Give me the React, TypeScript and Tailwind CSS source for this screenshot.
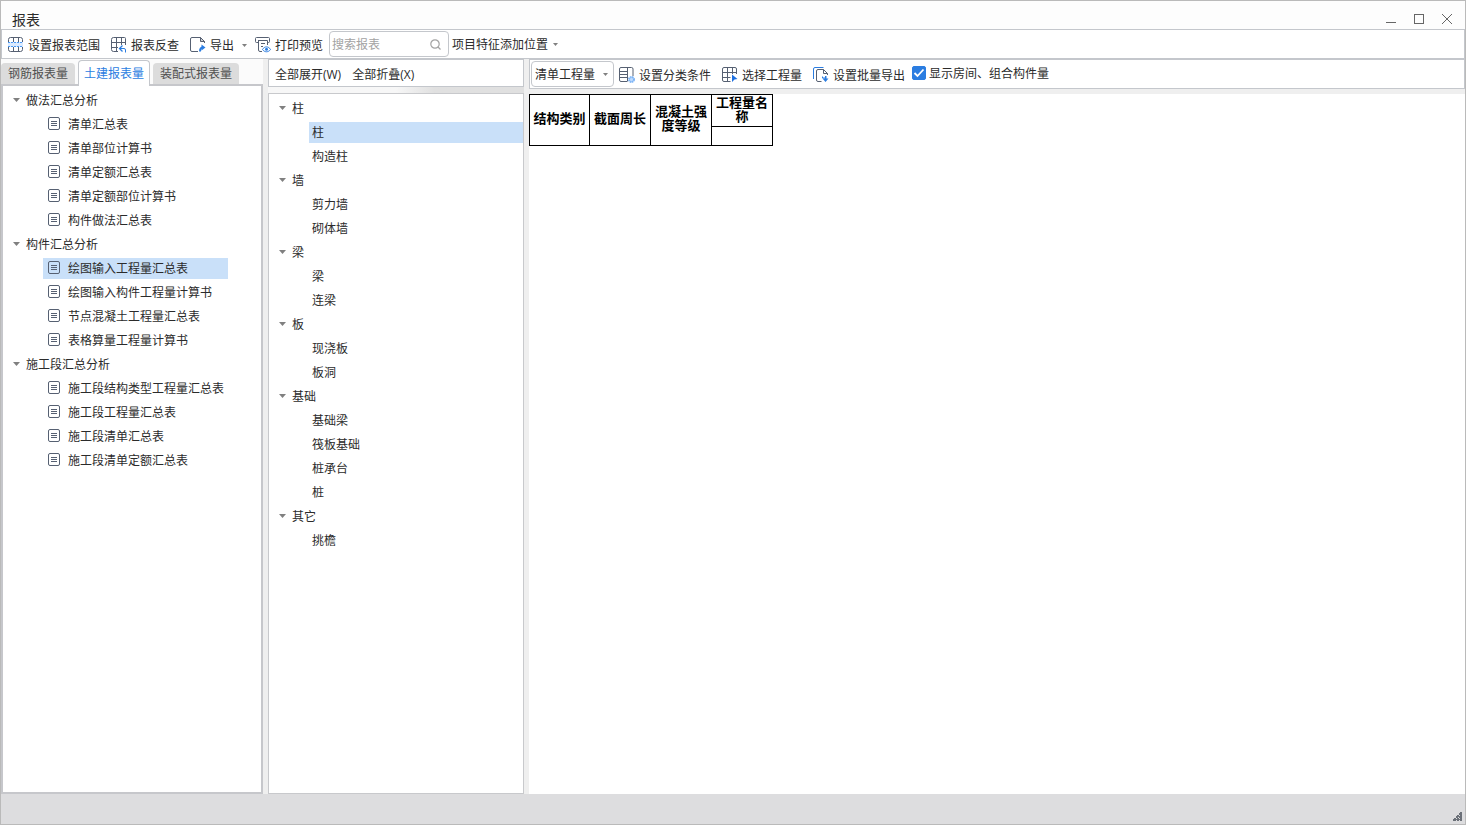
import { useState } from "react";
import type { ReactNode } from "react";

type TreeGroup = { name: string; items: string[] };

const reportTree: TreeGroup[] = [
  {
    name: "做法汇总分析",
    items: ["清单汇总表", "清单部位计算书", "清单定额汇总表", "清单定额部位计算书", "构件做法汇总表"],
  },
  {
    name: "构件汇总分析",
    items: ["绘图输入工程量汇总表", "绘图输入构件工程量计算书", "节点混凝土工程量汇总表", "表格算量工程量计算书"],
  },
  {
    name: "施工段汇总分析",
    items: ["施工段结构类型工程量汇总表", "施工段工程量汇总表", "施工段清单汇总表", "施工段清单定额汇总表"],
  },
];

const componentTree: TreeGroup[] = [
  { name: "柱", items: ["柱", "构造柱"] },
  { name: "墙", items: ["剪力墙", "砌体墙"] },
  { name: "梁", items: ["梁", "连梁"] },
  { name: "板", items: ["现浇板", "板洞"] },
  { name: "基础", items: ["基础梁", "筏板基础", "桩承台", "桩"] },
  { name: "其它", items: ["挑檐"] },
];

const tabs = ["钢筋报表量", "土建报表量", "装配式报表量"];

const Icon = ({ children }: { children: ReactNode }) => (
  <svg width="16" height="16" viewBox="0 0 16 16" fill="none" stroke="#566072" className="shrink-0" aria-hidden="true">
    {children}
  </svg>
);

const RangeIcon = () => (
  <Icon>
    <path d="M.5 5V2.500a2 2 0 0 1 2-2h10a2 2 0 0 1 2 2V5M.5 10v2.500a2 2 0 0 0 2 2h10a2 2 0 0 0 2-2V10M5.500.5V5M10.500.5V5M5.500 10v4.500M10.500 10v4.500" />
    <path d="M0 5h15v5H0z" fill="#dbeafe" stroke="none" />
    <path d="M0 5.500h15M0 9.500h15" stroke="#4a9af5" strokeDasharray="2 1" />
  </Icon>
);

const TraceIcon = () => (
  <Icon>
    <path d="M14.500 8V1.500a1 1 0 0 0-1-1h-11a2 2 0 0 0-2 2v10a2 2 0 0 0 2 2H7M.5 5.500h14M.5 10.500H7M5.500.5v14M10.500.5V8" />
    <path d="M9 11.500h4a1.500 1.500 0 0 1 1.500 1.500v2.500" stroke="#2b7de1" />
    <path d="M11.500 8.500 8.500 11.500l3 3" stroke="#2b7de1" strokeWidth="1.300" />
  </Icon>
);

const ExportIcon = () => (
  <Icon>
    <path d="M8 14.500H2a1.500 1.500 0 0 1-1.500-1.500V2A1.500 1.500 0 0 1 2 .5h8.500l4 4V6" />
    <path d="M10.500.5v4h4z" fill="#566072" fillOpacity=".3" />
    <path d="M10 14.500c0-2.500.5-4 3-4" stroke="#2b7de1" strokeWidth="2" />
    <path d="m11.500 7.500 4 3-4 3z" fill="#2b7de1" stroke="none" />
  </Icon>
);

const PreviewIcon = () => (
  <Icon>
    <path d="M3 5.500H1.500a1 1 0 0 1-1-1v-3a1 1 0 0 1 1-1h12a1 1 0 0 1 1 1v3a1 1 0 0 1-1 1H12M3 3.500h9.500V8M3.500 3.500V13a1.500 1.500 0 0 0 1.500 1.500h2M6 6.500h4M6 9.500h2" />
    <path d="M7.500 12.500c2-3.500 6-3.500 8 0-2 3-6 3-8 0z" stroke="#2b7de1" fill="#fff" />
    <circle cx="11.500" cy="12.300" r="1.500" fill="#2b7de1" stroke="none" />
  </Icon>
);

const ClassifyIcon = () => (
  <Icon>
    <path d="M8 14.500H2a1.500 1.500 0 0 1-1.500-1.500V2A1.500 1.500 0 0 1 2 .5h10.500A1.500 1.500 0 0 1 14 2v7M8.500.5v14M.5 4.500h8M.5 7.500h8M.5 10.500h8" />
    <circle cx="12.500" cy="12.500" r="2.500" stroke="#7db4f5" strokeWidth="2" strokeDasharray="1.500 .5" fill="#bfdbfe" />
  </Icon>
);

const PickIcon = () => (
  <Icon>
    <path d="M14.500 7V2a1.500 1.500 0 0 0-1.500-1.500H2A1.500 1.500 0 0 0 .5 2v11A1.500 1.500 0 0 0 2 14.500h6.500M.5 5.500h14M.5 10.500h8M5.500.5v14M10.500.5V7" />
    <path d="m10 7.500 5.500 4.500-3 .5-2.500 2.500z" fill="#1d6fe0" stroke="none" />
  </Icon>
);

const BatchIcon = () => (
  <Icon>
    <path d="M.5 12V2A1.500 1.500 0 0 1 2 .5h8.500" stroke="#2b7de1" />
    <path d="M8.500 14.500H5A1.500 1.500 0 0 1 3.500 13V4A1.500 1.500 0 0 1 5 2.500h5.500l4 4V8M10.500 2.500v4h4" />
    <path d="M9.500 9.500v1.500h3" stroke="#2b7de1" />
    <path d="M9.500 11.500h6l-3 3.500zM12 9h1.500v3H12z" fill="#2b7de1" stroke="none" />
  </Icon>
);

const Caret = ({ small = false }: { small?: boolean }) => (
  <svg
    width={small ? 5 : 7}
    height={small ? 3 : 4}
    viewBox="0 0 7 4"
    fill="currentColor"
    className="shrink-0 text-[#808080]"
    aria-hidden="true"
  >
    <path d="M0 0h7L3.500 4z" />
  </svg>
);

const DocIcon = () => (
  <svg width="12" height="13" viewBox="0 0 12 13" fill="none" stroke="#566072" className="mb-0.5 shrink-0" aria-hidden="true">
    <rect x=".5" y=".5" width="11" height="12" rx="1.500" />
    <path d="M3 4.500h6M3 6.500h6M3 8.500h6" />
  </svg>
);

const ToolButton = ({ icon, label }: { icon: ReactNode; label: string }) => (
  <button type="button" className="flex items-center gap-1 whitespace-nowrap">
    {icon}
    <span className="pt-0.5">{label}</span>
  </button>
);

type TreeProps = {
  groups: TreeGroup[];
  selected: string;
  onSelect: (key: string) => void;
  withIcons?: boolean;
};

const Tree = ({ groups, selected, onSelect, withIcons }: TreeProps) => (
  <ul className="pt-0.5">
    {groups.map((group) => (
      <li key={group.name}>
        <button type="button" className="flex h-6 items-center gap-1.5 pl-2.5">
          <Caret />
          <span className="pt-0.5">{group.name}</span>
        </button>
        <ul className={withIcons ? "w-fit pl-10" : "pl-10"}>
          {group.items.map((item) => {
            const key = `${group.name}/${item}`;
            const active = key === selected;
            return (
              <li key={key} className="flex h-6 items-center">
                <button
                  type="button"
                  onClick={() => onSelect(key)}
                  className={`flex h-[21px] items-center gap-2 whitespace-nowrap ${
                    withIcons ? "min-w-[185px] px-[5px]" : "w-full pl-[3px]"
                  } ${active ? "bg-[#c9e0f9]" : ""}`}
                >
                  {withIcons && <DocIcon />}
                  <span className="pt-0.5">{item}</span>
                </button>
              </li>
            );
          })}
        </ul>
      </li>
    ))}
  </ul>
);

const App = () => {
  const [activeTab, setActiveTab] = useState("土建报表量");
  const [report, setReport] = useState("构件汇总分析/绘图输入工程量汇总表");
  const [component, setComponent] = useState("柱/柱");
  const [showRooms, setShowRooms] = useState(true);

  return (
    <div className="flex min-h-screen flex-col border border-[#bababa] bg-[#fdfdfd] font-['Open_Sans','Noto_Sans_CJK_SC',sans-serif] text-xs leading-4 text-[#2b2b2b]">
      {/* Title bar */}
      <header className="flex h-7 items-center justify-between pt-2 pr-3 pl-[11px]">
        <h1 className="pt-0.5 text-sm leading-5">报表</h1>
        <div className="flex items-center gap-4 text-[#666]">
          <button type="button" aria-label="最小化">
            <svg width="12" height="12" viewBox="0 0 12 12" stroke="currentColor">
              <path d="M1 9.500h10" />
            </svg>
          </button>
          <button type="button" aria-label="最大化">
            <svg width="12" height="12" viewBox="0 0 12 12" fill="none" stroke="currentColor">
              <rect x="1.500" y="1.500" width="9" height="9" />
            </svg>
          </button>
          <button type="button" aria-label="关闭">
            <svg width="12" height="12" viewBox="0 0 12 12" stroke="currentColor">
              <path d="m1 1 10 10M11 1 1 11" />
            </svg>
          </button>
        </div>
      </header>

      {/* Main toolbar */}
      <div className="flex h-[30px] items-center border border-[#c4c7cc] bg-white pl-1.5">
        <div className="flex items-center gap-2 pt-0.5">
          <div className="flex items-center gap-[11px]">
            <ToolButton icon={<RangeIcon />} label="设置报表范围" />
            <ToolButton icon={<TraceIcon />} label="报表反查" />
            <div className="flex items-center gap-2">
              <ToolButton icon={<ExportIcon />} label="导出" />
              <button type="button" aria-label="导出选项">
                <Caret small />
              </button>
            </div>
          </div>
          <ToolButton icon={<PreviewIcon />} label="打印预览" />
        </div>
        <div className="ml-1.5 flex h-[26px] w-[120px] items-center rounded border border-[#c4c7cc] pr-[7px] pl-0.5">
          <input
            type="text"
            aria-label="搜索报表"
            placeholder="搜索报表"
            className="min-w-0 flex-1 pt-0.5 outline-none placeholder:text-[#a3a3a3]"
          />
          <svg width="11" height="11" viewBox="0 0 11 11" fill="none" stroke="#a3a3a3" strokeWidth="1.200" aria-hidden="true">
            <circle cx="5" cy="5" r="4.200" />
            <path d="m8 8 2.500 2.500" />
          </svg>
        </div>
        <button type="button" className="ml-[3px] flex items-center gap-[5px] whitespace-nowrap">
          <span className="pt-0.5">项目特征添加位置</span>
          <Caret small />
        </button>
      </div>

      <main className="flex flex-1 bg-[#efefef]">
        {/* Report list */}
        <aside className="flex w-[262px] shrink-0 flex-col">
          <div role="tablist" className="flex h-[25px] items-end gap-[3px] bg-[#fbfbfb]">
            {tabs.map((tab) => (
              <button
                key={tab}
                type="button"
                role="tab"
                aria-selected={tab === activeTab}
                onClick={() => setActiveTab(tab)}
                className={
                  tab === activeTab
                    ? "relative z-10 -mb-0.5 h-[26px] rounded-t border border-b-0 border-[#c4c7cc] bg-white px-[5px] text-[#2b7de1]"
                    : "h-[21px] rounded-t bg-[#dcdcdc] px-[7px] text-[#505050]"
                }
              >
                {tab}
              </button>
            ))}
          </div>
          <div className="flex-1 border-2 border-[#c6c7cb] bg-white">
            <Tree groups={reportTree} selected={report} onSelect={setReport} withIcons />
          </div>
        </aside>

        {/* Component list */}
        <section className="ml-[5px] flex w-64 shrink-0 flex-col">
          <div className="flex h-7 items-center gap-[11px] border border-[#c4c7cc] bg-white px-1.5 pt-1">
            <button type="button">全部展开(W)</button>
            <button type="button">全部折叠(X)</button>
          </div>
          <div className="h-1.5 bg-linear-to-r from-[#f7f7f7] from-50% to-[#e0e0e0] to-65%" />
          <div className="flex-1 border border-[#c8c9cc] bg-white">
            <Tree groups={componentTree} selected={component} onSelect={setComponent} />
          </div>
        </section>

        {/* Report preview */}
        <section className="ml-[5px] flex min-w-0 flex-1 flex-col">
          <div className="flex h-[30px] items-center border border-[#c4c7cc] bg-white pl-px">
            <div className="relative mr-[5px]">
              <select
                aria-label="工程量类型"
                className="h-[26px] w-[83px] appearance-none rounded border border-[#c4c7cc] bg-white pt-0.5 pl-[3px]"
              >
                <option>清单工程量</option>
                <option>定额工程量</option>
              </select>
              <span className="pointer-events-none absolute inset-y-0 right-1.5 flex items-center">
                <Caret small />
              </span>
            </div>
            <div className="flex items-center gap-[11px] pt-0.5">
              <ToolButton icon={<ClassifyIcon />} label="设置分类条件" />
              <ToolButton icon={<PickIcon />} label="选择工程量" />
              <ToolButton icon={<BatchIcon />} label="设置批量导出" />
            </div>
            <label className="mb-0.5 ml-[7px] flex items-center gap-[3px] whitespace-nowrap">
              <span className="grid">
                <input
                  type="checkbox"
                  checked={showRooms}
                  onChange={(e) => setShowRooms(e.target.checked)}
                  className="col-start-1 row-start-1 size-3.5 appearance-none rounded-xs border border-[#2b7de1] checked:bg-[#2b7de1]"
                />
                {showRooms && (
                  <svg
                    width="14"
                    height="14"
                    viewBox="0 0 14 14"
                    fill="none"
                    stroke="#fff"
                    strokeWidth="1.800"
                    className="pointer-events-none col-start-1 row-start-1"
                  >
                    <path d="m2.500 7 3 3 6-6.500" />
                  </svg>
                )}
              </span>
              <span className="pt-0.5">显示房间、组合构件量</span>
            </label>
          </div>
          <div className="mt-[5px] flex-1 bg-white">
            <table className="w-[244px] table-fixed border-collapse text-center font-['Liberation_Serif','Noto_Sans_CJK_SC',serif] text-[13px] leading-[14px] text-black">
              <colgroup>
                <col className="w-[60px]" />
                <col className="w-[61px]" />
                <col className="w-[61px]" />
                <col />
              </colgroup>
              <thead>
                <tr className="h-8">
                  <th rowSpan={2} className="border border-black p-0 pb-0.5">结构类别</th>
                  <th rowSpan={2} className="border border-black p-0 pb-0.5">截面周长</th>
                  <th rowSpan={2} className="border border-black p-0 pb-0.5">混凝土强度等级</th>
                  <th className="border border-black p-0 pb-0.5">工程量名称</th>
                </tr>
                <tr className="h-[19px]">
                  <td className="border border-black p-0" />
                </tr>
              </thead>
            </table>
          </div>
        </section>
      </main>

      {/* Status bar */}
      <footer className="flex h-[30px] items-end justify-end bg-[#dddddf] pr-0.5 pb-0.5">
        <svg width="10" height="10" viewBox="0 0 10 10" fill="#6b7078" aria-hidden="true">
          <path d="M7 0h2v3H6V1h1zM4 3h2v1h1V3h2v3H6V5H5v1H3V4h1zM1 6h2v1h1V6h2v1h1V6h2v3H7V8H6v1H4V8H3v1H0V7h1z" />
        </svg>
      </footer>
    </div>
  );
};

export default App;
